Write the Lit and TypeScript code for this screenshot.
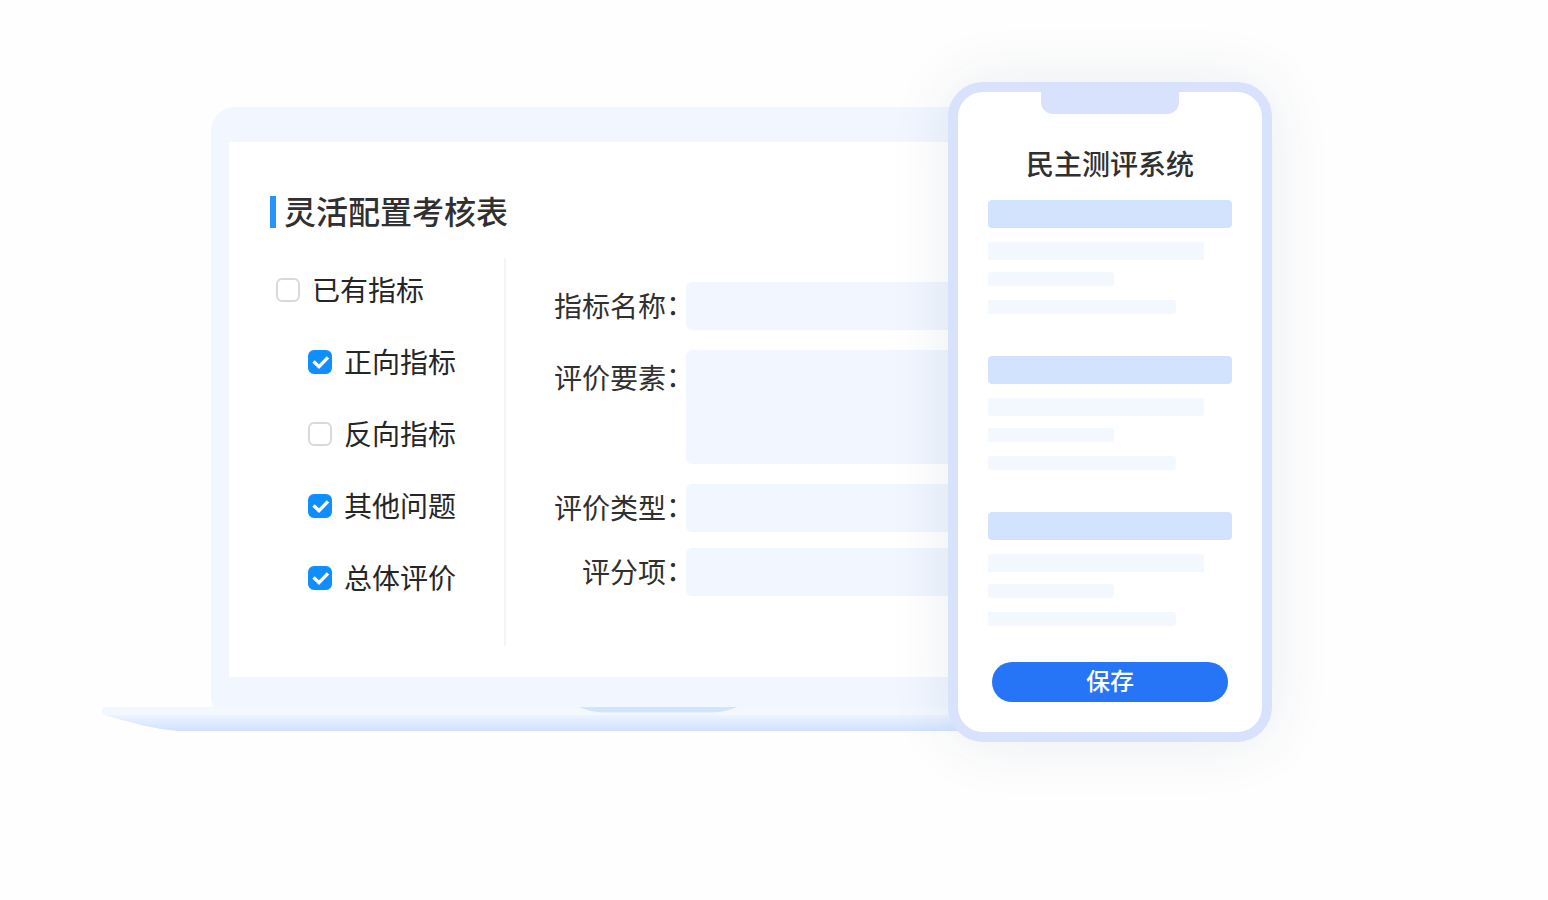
import { LitElement, html, css, svg, nothing } from "lit";
import { customElement, property, state } from "lit/decorators.js";
import { classMap } from "lit/directives/class-map.js";

interface Indicator {
  id: string;
  label: string;
  checked: boolean;
  nested: boolean;
}

@customElement("indicator-list")
class IndicatorList extends LitElement {
  static styles = css`
    :host {
      display: block;
    }
    .list {
      display: flex;
      flex-direction: column;
      gap: 40px;
      margin: 0;
      padding: 16px 0 0 6px;
      list-style: none;
    }
    .nested {
      padding-left: 32px;
    }
    .row {
      display: flex;
      align-items: center;
      gap: 12px;
      height: 32px;
      color: #262626;
      font-size: 28px;
      line-height: 32px;
      white-space: nowrap;
      cursor: pointer;
    }
    .text {
      padding-bottom: 2px;
    }
    .tick {
      display: grid;
      width: 24px;
      height: 24px;
    }
    .box,
    .mark {
      grid-area: 1 / 1;
      width: 24px;
      height: 24px;
      margin: 0;
    }
    .box {
      box-sizing: border-box;
      appearance: none;
      border: 2px solid #d9d9d9;
      border-radius: 6px;
      background: #fff;
      cursor: pointer;
    }
    .box:checked {
      border-color: #0f8eff;
      background: #0f8eff;
    }
    .mark {
      pointer-events: none;
      z-index: 1;
    }
  `;

  @state() items: Indicator[] = [
    { id: "existing", label: "已有指标", checked: false, nested: false },
    { id: "positive", label: "正向指标", checked: true, nested: true },
    { id: "negative", label: "反向指标", checked: false, nested: true },
    { id: "other", label: "其他问题", checked: true, nested: true },
    { id: "overall", label: "总体评价", checked: true, nested: true },
  ];

  toggle(id: string) {
    this.items = this.items.map((i) => (i.id === id ? { ...i, checked: !i.checked } : i));
  }

  render() {
    return html`<ul class="list">
      ${this.items.map(
        (i) => html`<li class=${classMap({ nested: i.nested })}>
          <label class="row" for=${i.id}>
            <span class="tick">
              <input class="box" type="checkbox" id=${i.id} .checked=${i.checked} @change=${() => this.toggle(i.id)} />
              ${i.checked
                ? html`<svg class="mark" viewBox="0 0 24 24" aria-hidden="true">
                    <path d="M5.5 11.4 L11 16.7 L20 7.4" fill="none" stroke="#fff" stroke-width="3.4" />
                  </svg>`
                : nothing}
            </span>
            <span class="text">${i.label}</span>
          </label>
        </li>`
      )}
    </ul>`;
  }
}

@customElement("indicator-form")
class IndicatorForm extends LitElement {
  static styles = css`
    :host {
      display: block;
    }
    .form {
      display: grid;
      grid-template-columns: 126px 1fr;
      align-items: start;
      gap: 20px 6px;
      padding: 24px 0 0 48px;
    }
    .label {
      display: flex;
      justify-content: flex-end;
      color: #303030;
      font-size: 28px;
      line-height: 46px;
      white-space: nowrap;
      height: 48px;
    }
    .label.tall {
      line-height: 54px;
    }
    .colon {
      font-family: "Noto Sans CJK TC", sans-serif;
      font-feature-settings: "halt";
    }
    .field {
      box-sizing: border-box;
      width: 100%;
      height: 48px;
      margin: 0;
      padding: 0 16px;
      border: 0;
      border-radius: 6px;
      outline: 0;
      appearance: none;
      resize: none;
      background: #f1f6ff;
      color: #303030;
      font: inherit;
      font-size: 28px;
    }
    .field.tall {
      display: block;
      height: 114px;
    }
    .last {
      margin-top: -4px;
    }
  `;

  render() {
    const colon = html`<span class="colon" lang="zh-Hant">：</span>`;
    return html`<form class="form" @submit=${(e: Event) => e.preventDefault()}>
      <label class="label" for="name">指标名称${colon}</label>
      <input class="field" id="name" type="text" />
      <label class="label tall" for="element">评价要素${colon}</label>
      <textarea class="field tall" id="element"></textarea>
      <label class="label" for="type">评价类型${colon}</label>
      <select class="field" id="type"><option value=""></option></select>
      <label class="label last" for="score">评分项${colon}</label>
      <input class="field last" id="score" type="text" />
    </form>`;
  }
}

@customElement("laptop-frame")
class LaptopFrame extends LitElement {
  static styles = css`
    :host {
      display: block;
    }
    .lid {
      box-sizing: border-box;
      margin: 0 109px;
      padding: 35px 18px 44px;
      border-radius: 24px;
      background: #f1f6ff;
    }
    .screen {
      box-sizing: border-box;
      min-height: 535px;
      padding: 54px 41px 31px;
      background: #fff;
    }
    .base {
      position: relative;
      margin-top: -14px;
    }
    .strip {
      display: flex;
      justify-content: center;
      height: 8px;
      border-radius: 3px;
      background: #f3f8ff;
    }
    .groove {
      width: 158px;
      height: 6px;
    }
    .keel {
      display: flex;
      height: 16px;
    }
    .cap {
      width: 80px;
      height: 16px;
      flex: none;
    }
    .belly {
      flex: 1;
      background: linear-gradient(#edf3ff, #d0e2ff);
    }
  `;

  cap(d: string, id: string) {
    return html`<svg class="cap" viewBox="0 0 80 16" aria-hidden="true">
      ${svg`<defs>
        <linearGradient id=${id} gradientUnits="userSpaceOnUse" x1="0" y1="0" x2="0" y2="16">
          <stop offset="0" stop-color="#edf3ff" />
          <stop offset="1" stop-color="#d0e2ff" />
        </linearGradient>
      </defs>
      <path d=${d} fill="url(#${id})" />`}
    </svg>`;
  }

  render() {
    return html`
      <div class="lid"><div class="screen"><slot></slot></div></div>
      <div class="base">
        <div class="strip">
          <svg class="groove" viewBox="0 0 158 6" aria-hidden="true">
            <path d="M0 0 H158 Q146 5.5 130 5.5 H28 Q12 5.5 0 0 Z" fill="#d2e3fd" />
          </svg>
        </div>
        <div class="keel">
          ${this.cap("M2 0 H80 V16 H76 C52 14 26 7 2 0 Z", "left")}
          <div class="belly"></div>
          ${this.cap("M78 0 H0 V16 H4 C28 14 54 7 78 0 Z", "right")}
        </div>
      </div>
    `;
  }
}

@customElement("phone-preview")
class PhonePreview extends LitElement {
  static styles = css`
    :host {
      display: block;
    }
    .phone {
      box-sizing: border-box;
      display: flex;
      flex-direction: column;
      min-height: 660px;
      padding: 0 30px 30px;
      border: 10px solid #d9e2fc;
      border-radius: 35px;
      background: #fff;
      box-shadow: 0 0 64px rgba(25, 50, 90, 0.09);
    }
    .notch {
      align-self: center;
      width: 138px;
      height: 22px;
      border-radius: 0 0 12px 12px;
      background: #d9e2fc;
    }
    .title {
      margin: 33px 0 21px;
      color: #303030;
      font-size: 28px;
      font-weight: 500;
      line-height: 32px;
      text-align: center;
    }
    .cards {
      display: flex;
      flex-direction: column;
      gap: 42px;
    }
    .card {
      display: flex;
      flex-direction: column;
      gap: 14px;
    }
    .bar {
      height: 14px;
      border-radius: 3px;
      background: #f3f8ff;
    }
    .head {
      height: 28px;
      border-radius: 4px;
      background: #d2e3fe;
    }
    .wide {
      width: 216px;
      height: 18px;
      margin-bottom: -2px;
    }
    .short {
      width: 126px;
    }
    .mid {
      width: 188px;
    }
    .save {
      height: 40px;
      margin: auto 4px 0;
      padding: 0 0 4px;
      border: 0;
      border-radius: 20px;
      background: #2675f6;
      color: #fff;
      font: inherit;
      font-size: 24px;
      font-weight: 500;
      line-height: 36px;
      cursor: pointer;
    }
  `;

  @property({ type: Number }) sections = 3;

  render() {
    return html`<section class="phone">
      <div class="notch"></div>
      <h2 class="title">民主测评系统</h2>
      <div class="cards">
        ${Array.from(
          { length: this.sections },
          () => html`<div class="card">
            <div class="bar head"></div>
            <div class="bar wide"></div>
            <div class="bar short"></div>
            <div class="bar mid"></div>
          </div>`
        )}
      </div>
      <button class="save" type="button">保存</button>
    </section>`;
  }
}

@customElement("app-root")
class AppRoot extends LitElement {
  static styles = css`
    :host {
      display: block;
      box-sizing: border-box;
      min-height: 100vh;
      background: #fefefe;
      font-family: "Noto Sans CJK SC", sans-serif;
    }
    .stage {
      display: flex;
      align-items: flex-start;
      padding: 82px 276px 80px 102px;
    }
    .laptop {
      flex: 1;
      min-width: 0;
      margin-top: 25px;
    }
    .phone {
      position: relative;
      flex: none;
      width: 324px;
      margin-left: -266px;
    }
    .title {
      margin: 0 0 30px;
      padding: 0 0 4px 8px;
      border-left: 6px solid #2694fb;
      color: #303030;
      font-size: 32px;
      font-weight: 500;
      line-height: 28px;
      white-space: nowrap;
    }
    .columns {
      display: flex;
      min-height: 388px;
    }
    .indicators {
      flex: none;
      box-sizing: border-box;
      width: 236px;
      border-right: 2px solid #f3f4f5;
    }
    .editor {
      flex: 1;
      min-width: 0;
    }
  `;

  render() {
    return html`<main class="stage">
      <laptop-frame class="laptop">
        <h1 class="title">灵活配置考核表</h1>
        <div class="columns">
          <indicator-list class="indicators"></indicator-list>
          <indicator-form class="editor"></indicator-form>
        </div>
      </laptop-frame>
      <phone-preview class="phone"></phone-preview>
    </main>`;
  }
}
